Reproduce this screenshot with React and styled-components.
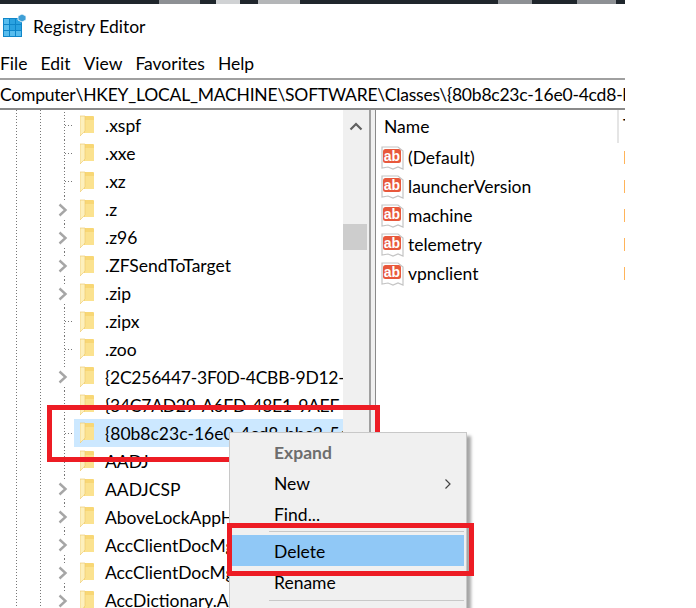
import React from "react";
import styled, { createGlobalStyle } from "styled-components";

const GlobalStyle = createGlobalStyle`
  html, body {
    margin: 0;
    height: 100%;
    background: #fff;
    overflow: hidden;
  }
  * { box-sizing: border-box; }
`;

const Page = styled.div`
  position: relative;
  width: 696px;
  height: 608px;
  overflow: hidden;
  font-family: Lato, "Open Sans", sans-serif;
  font-size: 17.5px;
  color: #000;
`;

const Win = styled.div`
  width: 625px;
  height: 608px;
  display: flex;
  flex-direction: column;
  overflow: hidden;
`;

const TopStrip = styled.div`
  height: 4px;
  flex: none;
  display: flex;
  background: #1f262c;
`;

const StripPiece = styled.span`
  height: 4px;
  flex: none;
  margin-left: ${p => p.$gap}px;
  width: ${p => p.$w}px;
  background: ${p => p.$c};
`;

const TitleBar = styled.div`
  height: 46px;
  flex: none;
  display: flex;
  align-items: center;
  gap: 6px;
  padding: 0 0 2px 3px;
`;

const MenuBar = styled.div`
  height: 28px;
  flex: none;
  display: flex;
  align-items: center;
  gap: 13px;
  padding-bottom: 2px;
`;

const AddressBar = styled.div`
  height: 32px;
  flex: none;
  display: flex;
  align-items: center;
  padding-top: 1px;
  border-top: 2px solid #a0a0a0;
  border-bottom: 2px solid #8a8a8a;
  letter-spacing: -0.22px;
  white-space: nowrap;
  overflow: hidden;
`;

const Panes = styled.div`
  flex: 1;
  min-height: 0;
  display: flex;
`;

const Tree = styled.div`
  width: 343px;
  flex: none;
  padding-top: 2px;
  overflow: hidden;
  background-image:
    repeating-linear-gradient(#777 0 1px, transparent 1px 3px),
    repeating-linear-gradient(#777 0 1px, transparent 1px 3px);
  background-size: 1px 100%, 1px 100%;
  background-position: 16px 0, 40px 0;
  background-repeat: no-repeat;
`;

const Row = styled.div`
  height: 27.95px;
  display: flex;
  align-items: center;
  padding-left: 52px;
  white-space: nowrap;
`;

const Guide = styled.span`
  position: relative;
  width: 22px;
  height: 100%;
  flex: none;
  background-image: repeating-linear-gradient(#777 0 1px, transparent 1px 3px);
  background-size: 1px 100%;
  background-position: 12px 0;
  background-repeat: no-repeat;
  display: flex;
  align-items: center;

  &::after {
    content: "";
    margin-left: 13px;
    width: 9px;
    height: 1px;
    background-image: repeating-linear-gradient(90deg, #777 0 1px, transparent 1px 3px);
  }
`;

const ChevronSlot = styled.span`
  width: 22px;
  height: 100%;
  flex: none;
  display: flex;
  align-items: center;
  justify-content: center;
  background: linear-gradient(#fff, #fff) 0 4px / 22px 20px no-repeat,
    repeating-linear-gradient(#777 0 1px, transparent 1px 3px) 12px 0 / 1px 100% no-repeat;
`;

const Item = styled.div`
  flex: 1;
  min-width: 0;
  height: 100%;
  display: flex;
  align-items: center;
  padding-left: 6px;
  background: ${p => (p.$selected ? "#cce8ff" : "transparent")};
`;

const ItemLabel = styled.span`
  margin-left: 10px;
  letter-spacing: ${p => (p.$tight ? "-0.25px" : "normal")};
`;

const Scrollbar = styled.div`
  width: 26px;
  flex: none;
  background: #f0f0f0;
  display: flex;
  flex-direction: column;
  align-items: center;
  padding-top: 12px;
`;

const Thumb = styled.div`
  width: 24px;
  height: 26px;
  margin-top: 93px;
  margin-right: 2px;
  background: #cdcdcd;
`;

const Splitter = styled.div`
  width: 7px;
  flex: none;
  background: #f0f0f0;
  border-left: 2px solid #a0a0a0;
  border-right: 1px solid #8a8a8a;
`;

const ListPane = styled.div`
  flex: 1;
  min-width: 0;
  overflow: hidden;
`;

const ListHead = styled.div`
  height: 33px;
  display: flex;
  align-items: center;
  padding-left: 8px;
  justify-content: space-between;
`;

const TypeHead = styled.span`
  height: 100%;
  width: 8px;
  overflow: hidden;
  border-left: 2px solid #e5e5e5;
  padding: 5px 0 0 4px;
`;

const Value = styled.div`
  height: 29px;
  display: flex;
  align-items: center;
  padding-left: 5px;
  gap: 3px;
  position: relative;
`;

const ValueMark = styled.span`
  position: absolute;
  right: 0;
  top: 8px;
  width: 1px;
  height: 13px;
  background: #ffb45a;
`;

const Menu = styled.div`
  position: absolute;
  left: 229px;
  top: 432px;
  width: 238px;
  height: 190px;
  background: #f0f0f0;
  border: 1px solid #c8c8c8;
  box-shadow: 4px 4px 3px rgba(0, 0, 0, 0.35);
  padding-top: 4px;
`;

const MenuItem = styled.div`
  height: 31px;
  margin: 0 2px;
  padding: ${p => (p.$low ? "2px" : "0")} 12px 0 42px;
  display: flex;
  align-items: center;
  justify-content: space-between;
  background: ${p => (p.$active ? "#90c8f6" : "transparent")};
  font-weight: ${p => (p.$bold ? 700 : 400)};
  color: ${p => (p.$bold ? "#6d6d6d" : "#000")};
`;

const MenuSep = styled.div`
  height: 1px;
  margin: ${p => p.$top}px 2px 3px 39px;
  background: #c8c8c8;
`;

const RedBox = styled.div`
  position: absolute;
  left: ${p => p.$x}px;
  top: ${p => p.$y}px;
  width: ${p => p.$w}px;
  height: ${p => p.$h}px;
  border: 5px solid #ed1c24;
  pointer-events: none;
`;

const RegLogo = () => (
  <svg width="24" height="24" viewBox="0 0 24 24">
    <rect x="0" y="4" width="19" height="19" fill="#0f86c9" />
    {[0, 1, 2].map(r => [0, 1, 2].map(c => (
      <rect key={`${r}${c}`} x={1 + c * 6} y={5 + r * 6} width="5" height="5" fill={r === 2 || c === 0 ? "#58bdee" : "#2aa2e0"} />
    )))}
    <polygon points="19,0 23,2 23,6 19,8 15,6 15,2" fill="#3f9fd6" stroke="#fff" strokeWidth="0.8" />
  </svg>
);

const Folder = () => (
  <svg width="15" height="22" viewBox="0 0 15 22" style={{ flex: "none" }}>
    <path d="M1 1 H13 Q14 1 14 2 V18 H4 V5 Z" fill="#f8d775" />
    <path d="M5 5 H14 V18 H5 Z" fill="#fbe28f" />
    <path d="M0 1 L5 1 L5 16 L0 21 Z" fill="#fdf0bd" stroke="#edc768" strokeWidth="0.6" />
  </svg>
);

const Chevron = () => (
  <svg width="10" height="14" viewBox="0 0 10 14">
    <path d="M1.5 1.5 L7.5 7 L1.5 12.5" fill="none" stroke="#a6a6a6" strokeWidth="2.4" />
  </svg>
);

const StringIcon = () => (
  <svg width="24" height="24" viewBox="0 0 24 24" style={{ flex: "none" }}>
    <path d="M1 1 H17 L22 5 V23 L17 21 L12 23 L7 21 L1 22 Z" fill="#fff" stroke="#c4c4c4" strokeWidth="1.2" />
    <rect x="2" y="3" width="18" height="14" rx="2.5" fill="#e8583c" />
    <text x="11" y="14.5" textAnchor="middle" fontFamily="Liberation Sans, sans-serif" fontWeight="700" fontSize="14" fill="#fff">ab</text>
  </svg>
);

const treeRows = [
  { name: ".xspf" },
  { name: ".xxe" },
  { name: ".xz" },
  { name: ".z", more: true },
  { name: ".z96", more: true },
  { name: ".ZFSendToTarget", more: true },
  { name: ".zip", more: true },
  { name: ".zipx" },
  { name: ".zoo" },
  { name: "{2C256447-3F0D-4CBB-9D12-575A8C6A5E3B}", more: true, tight: true },
  { name: "{34C7AD29-A6FD-48E1-9AEF-1C2B3D4E5F60}", tight: true },
  { name: "{80b8c23c-16e0-4cd8-bbc3-5d9f7a1e2c40}", selected: true },
  { name: "AADJ" },
  { name: "AADJCSP", more: true },
  { name: "AboveLockAppHost.1", more: true },
  { name: "AccClientDocMgr.AccClientDocMgr", more: true },
  { name: "AccClientDocMgr.AccClientDocMgr.1", more: true },
  { name: "AccDictionary.AccDictionary", more: true },
];

const values = ["(Default)", "launcherVersion", "machine", "telemetry", "vpnclient"];

const App = () => (
  <Page>
    <GlobalStyle />
    <Win>
      <TopStrip>
        <StripPiece $gap={159} $w={41} $c="#8d9094" />
        <StripPiece $gap={16} $w={24} $c="#d0d2d4" />
        <StripPiece $gap={18} $w={42} $c="#b4b6b8" />
        <StripPiece $gap={198} $w={34} $c="#8d9094" />
        <StripPiece $gap={45} $w={39} $c="#8d9094" />
      </TopStrip>
      <TitleBar>
        <RegLogo />
        <span>Registry Editor</span>
      </TitleBar>
      <MenuBar>
        <span>File</span>
        <span>Edit</span>
        <span>View</span>
        <span>Favorites</span>
        <span>Help</span>
      </MenuBar>
      <AddressBar>Computer\HKEY_LOCAL_MACHINE\SOFTWARE\Classes\{"{"}80b8c23c-16e0-4cd8-bbc3-5d9f7a1e2c40{"}"}</AddressBar>
      <Panes>
        <Tree>
          {treeRows.map(row => (
            <Row key={row.name}>
              {row.more ? <ChevronSlot><Chevron /></ChevronSlot> : <Guide />}
              <Item $selected={row.selected}>
                <Folder />
                <ItemLabel $tight={row.tight}>{row.name}</ItemLabel>
              </Item>
            </Row>
          ))}
        </Tree>
        <Scrollbar>
          <svg width="14" height="9" viewBox="0 0 14 9">
            <path d="M1.5 7.5 L7 2 L12.5 7.5" fill="none" stroke="#606060" strokeWidth="2.2" />
          </svg>
          <Thumb />
        </Scrollbar>
        <Splitter />
        <ListPane>
          <ListHead>
            <span>Name</span>
            <TypeHead>T</TypeHead>
          </ListHead>
          {values.map(v => (
            <Value key={v}>
              <StringIcon />
              <span>{v}</span>
              <ValueMark />
            </Value>
          ))}
        </ListPane>
      </Panes>
    </Win>
    <RedBox $x={47} $y={405} $w={333} $h={57} />
    <Menu>
      <MenuItem $bold>Expand</MenuItem>
      <MenuItem>
        New
        <svg width="8" height="12" viewBox="0 0 8 12">
          <path d="M1.5 1.5 L6 6 L1.5 10.5" fill="none" stroke="#444" strokeWidth="1.2" />
        </svg>
      </MenuItem>
      <MenuItem>Find...</MenuItem>
      <MenuSep $top={1} />
      <MenuItem $active $low>Delete</MenuItem>
      <MenuItem $low>Rename</MenuItem>
      <MenuSep $top={3} />
    </Menu>
    <RedBox $x={227} $y={523} $w={247} $h={53} />
  </Page>
);

export default App;
